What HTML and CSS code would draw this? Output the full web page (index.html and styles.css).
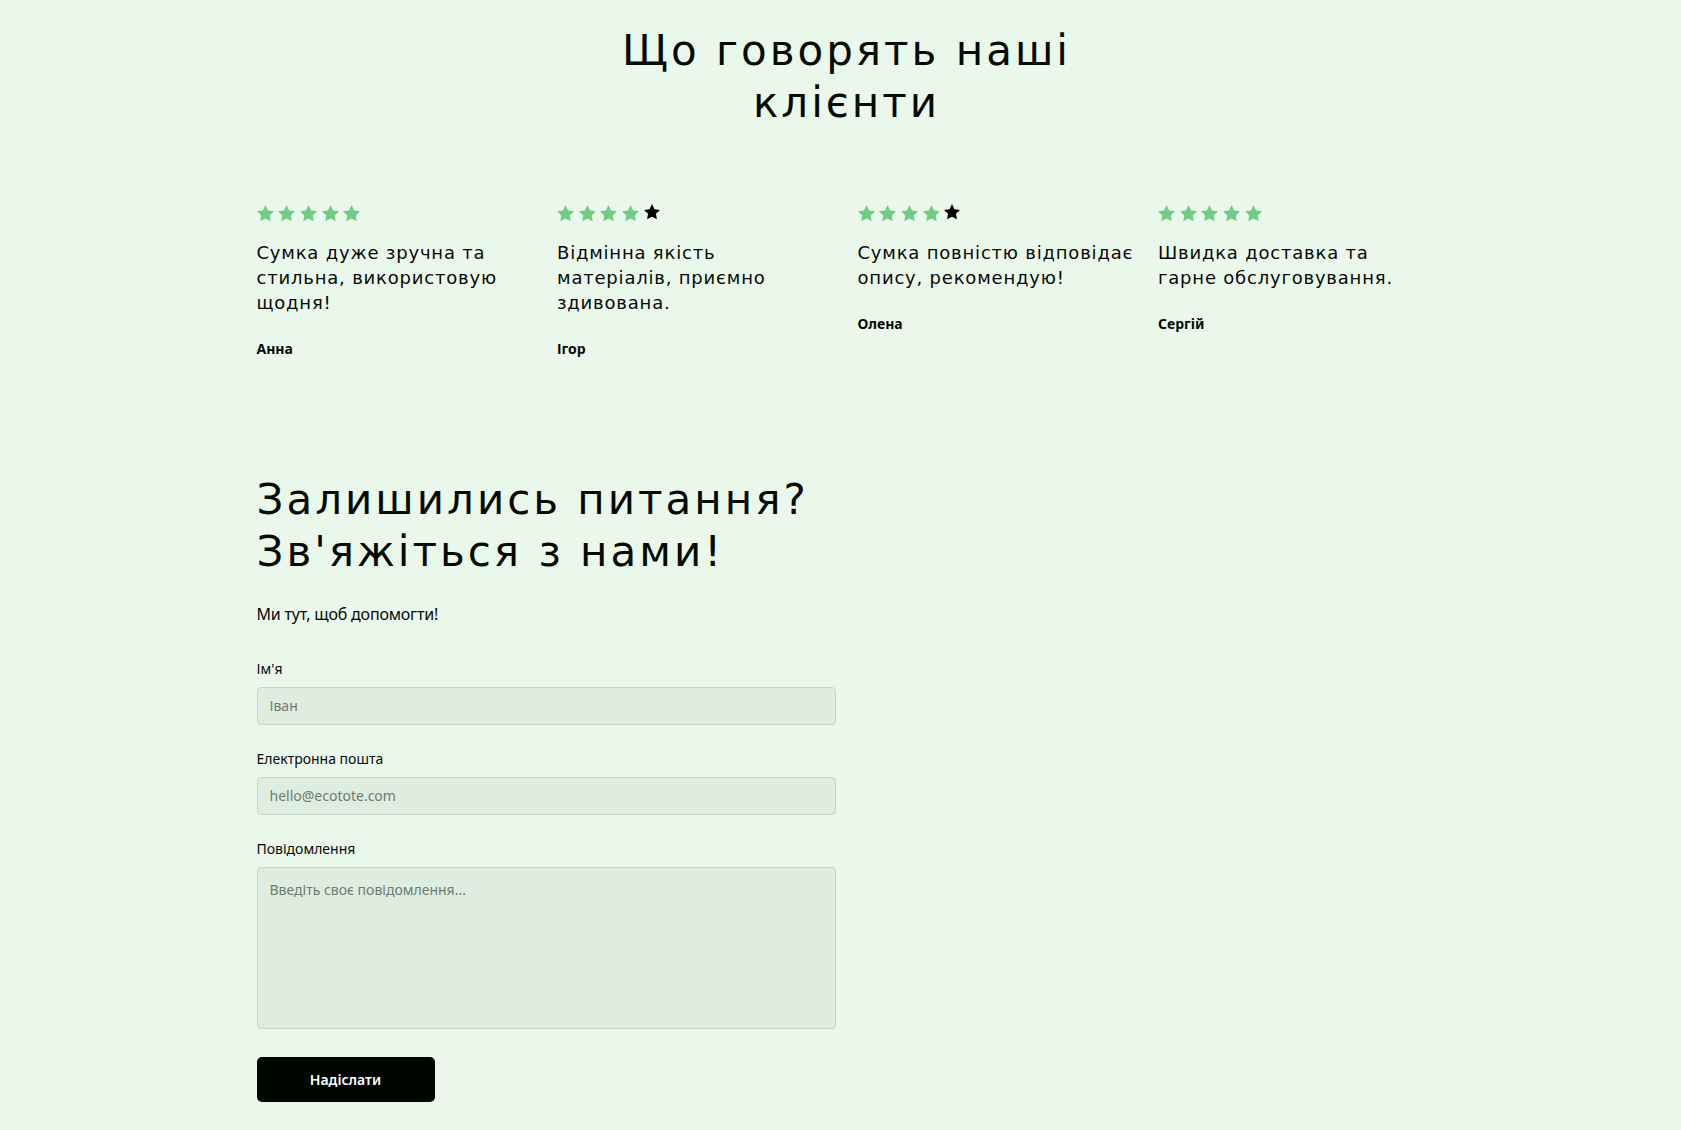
FILE: index.html
```html
<!DOCTYPE html>
<html lang="uk">
<head>
    <meta charset="UTF-8">
    <meta name="viewport" content="width=device-width, initial-scale=1.0">
    <title>EcoTote - Відгуки та контакти</title>
    <link rel="stylesheet" href="styles.css">
</head>
<body>

    <svg width="0" height="0" class="sprite">
        <symbol id="star" viewBox="2.4 2.4 19.2 19.2">
            <path d="M12 2.5l2.95 6.1 6.6.95-4.8 4.65 1.15 6.6L12 17.7l-5.9 3.1 1.15-6.6-4.8-4.65 6.6-.95z"/>
        </symbol>
    </svg>

    <section class="reviews">
        <div class="container">
            <h2 class="reviews-title">Що говорять наші клієнти</h2>

            <div class="reviews-grid">
                <div class="review">
                    <div class="stars">
                        <svg class="star"><use href="#star"/></svg>
                        <svg class="star"><use href="#star"/></svg>
                        <svg class="star"><use href="#star"/></svg>
                        <svg class="star"><use href="#star"/></svg>
                        <svg class="star"><use href="#star"/></svg>
                    </div>
                    <p class="review-text">Сумка дуже зручна та<br>стильна, використовую<br>щодня!</p>
                    <p class="review-author">Анна</p>
                </div>

                <div class="review">
                    <div class="stars">
                        <svg class="star"><use href="#star"/></svg>
                        <svg class="star"><use href="#star"/></svg>
                        <svg class="star"><use href="#star"/></svg>
                        <svg class="star"><use href="#star"/></svg>
                        <svg class="star empty"><use href="#star"/></svg>
                    </div>
                    <p class="review-text">Відмінна якість<br>матеріалів, приємно<br>здивована.</p>
                    <p class="review-author">Ігор</p>
                </div>

                <div class="review">
                    <div class="stars">
                        <svg class="star"><use href="#star"/></svg>
                        <svg class="star"><use href="#star"/></svg>
                        <svg class="star"><use href="#star"/></svg>
                        <svg class="star"><use href="#star"/></svg>
                        <svg class="star empty"><use href="#star"/></svg>
                    </div>
                    <p class="review-text">Сумка повністю відповідає<br>опису, рекомендую!</p>
                    <p class="review-author">Олена</p>
                </div>

                <div class="review">
                    <div class="stars">
                        <svg class="star"><use href="#star"/></svg>
                        <svg class="star"><use href="#star"/></svg>
                        <svg class="star"><use href="#star"/></svg>
                        <svg class="star"><use href="#star"/></svg>
                        <svg class="star"><use href="#star"/></svg>
                    </div>
                    <p class="review-text">Швидка доставка та<br>гарне обслуговування.</p>
                    <p class="review-author">Сергій</p>
                </div>
            </div>
        </div>
    </section>

    <section class="contact">
        <div class="container">
            <h2 class="contact-title">Залишились питання?<br>Зв'яжіться з нами!</h2>
            <p class="contact-sub">Ми тут, щоб допомогти!</p>

            <form class="contact-form" action="#" method="POST">
                <div class="field">
                    <label for="name">Ім'я</label>
                    <input type="text" id="name" name="name" placeholder="Іван">
                </div>

                <div class="field">
                    <label for="email">Електронна пошта</label>
                    <input type="email" id="email" name="email" placeholder="hello@ecotote.com">
                </div>

                <div class="field">
                    <label for="message">Повідомлення</label>
                    <textarea id="message" name="message" placeholder="Введіть своє повідомлення..."></textarea>
                </div>

                <button type="submit" class="submit-btn">Надіслати</button>
            </form>
        </div>
    </section>

</body>
</html>
```

FILE: styles.css
```css
body {
    margin: 0;
    background: #eaf8ec;
    color: #050a05;
    font-family: "Noto Sans", "Open Sans", sans-serif;
}
.sprite {
    position: absolute;
}
.container {
    max-width: 1168px;
    margin: 0 auto;
}

/* reviews */
.reviews {
    padding-top: 25px;
}
.reviews-title {
    font-family: "DejaVu Sans", sans-serif;
    font-weight: normal;
    font-size: 42px;
    line-height: 52px;
    letter-spacing: 3px;
    text-align: center;
    max-width: 540px;
    margin: 0 auto 74px;
    padding-left: 12px;
}
.reviews-grid {
    display: grid;
    grid-template-columns: repeat(4, 280px);
    gap: 20.5px;
}
.stars {
    display: flex;
    gap: 4.7px;
    height: 20px;
    align-items: center;
    margin-bottom: 17px;
}
.star {
    width: 17px;
    height: 17px;
    fill: #70cc84;
}
.star.empty {
    fill: #000;
    width: 16px;
    height: 16px;
    margin-top: -3px;
}
.review-text {
    font-family: "DejaVu Sans", sans-serif;
    font-size: 18px;
    line-height: 25px;
    letter-spacing: 0.8px;
    margin: 0;
}
.review-author {
    font-size: 14px;
    font-weight: 700;
    line-height: 20px;
    margin: 24px 0 0;
}

/* contact */
.contact {
    padding-top: 115px;
    padding-bottom: 28px;
}
.contact-title {
    font-family: "DejaVu Sans", sans-serif;
    font-weight: normal;
    font-size: 42px;
    line-height: 52px;
    letter-spacing: 3px;
    margin: 0;
}
.contact-sub {
    font-size: 16px;
    line-height: 24px;
    letter-spacing: -0.2px;
    margin: 24px 0 32px;
}
.contact-form {
    max-width: 579px;
}
.field {
    margin-bottom: 23px;
}
.field label {
    display: block;
    font-size: 14px;
    line-height: 21px;
    margin-bottom: 8px;
}
input, textarea {
    display: block;
    width: 100%;
    box-sizing: border-box;
    font-family: inherit;
    font-size: 14px;
    line-height: 20px;
    color: #050a05;
    background: #dfede0;
    border: 1px solid #c6d7c9;
    border-radius: 4px;
    padding: 8px 12px;
}
input::placeholder, textarea::placeholder {
    color: #6d7b70;
}
textarea {
    height: 162px;
    padding-top: 12px;
    resize: none;
}
.submit-btn {
    margin-top: 5px;
    width: 178px;
    height: 45px;
    border: none;
    border-radius: 5px;
    background: #000500;
    color: #fff;
    font-family: inherit;
    font-size: 14px;
    font-weight: 600;
    cursor: pointer;
}
```
